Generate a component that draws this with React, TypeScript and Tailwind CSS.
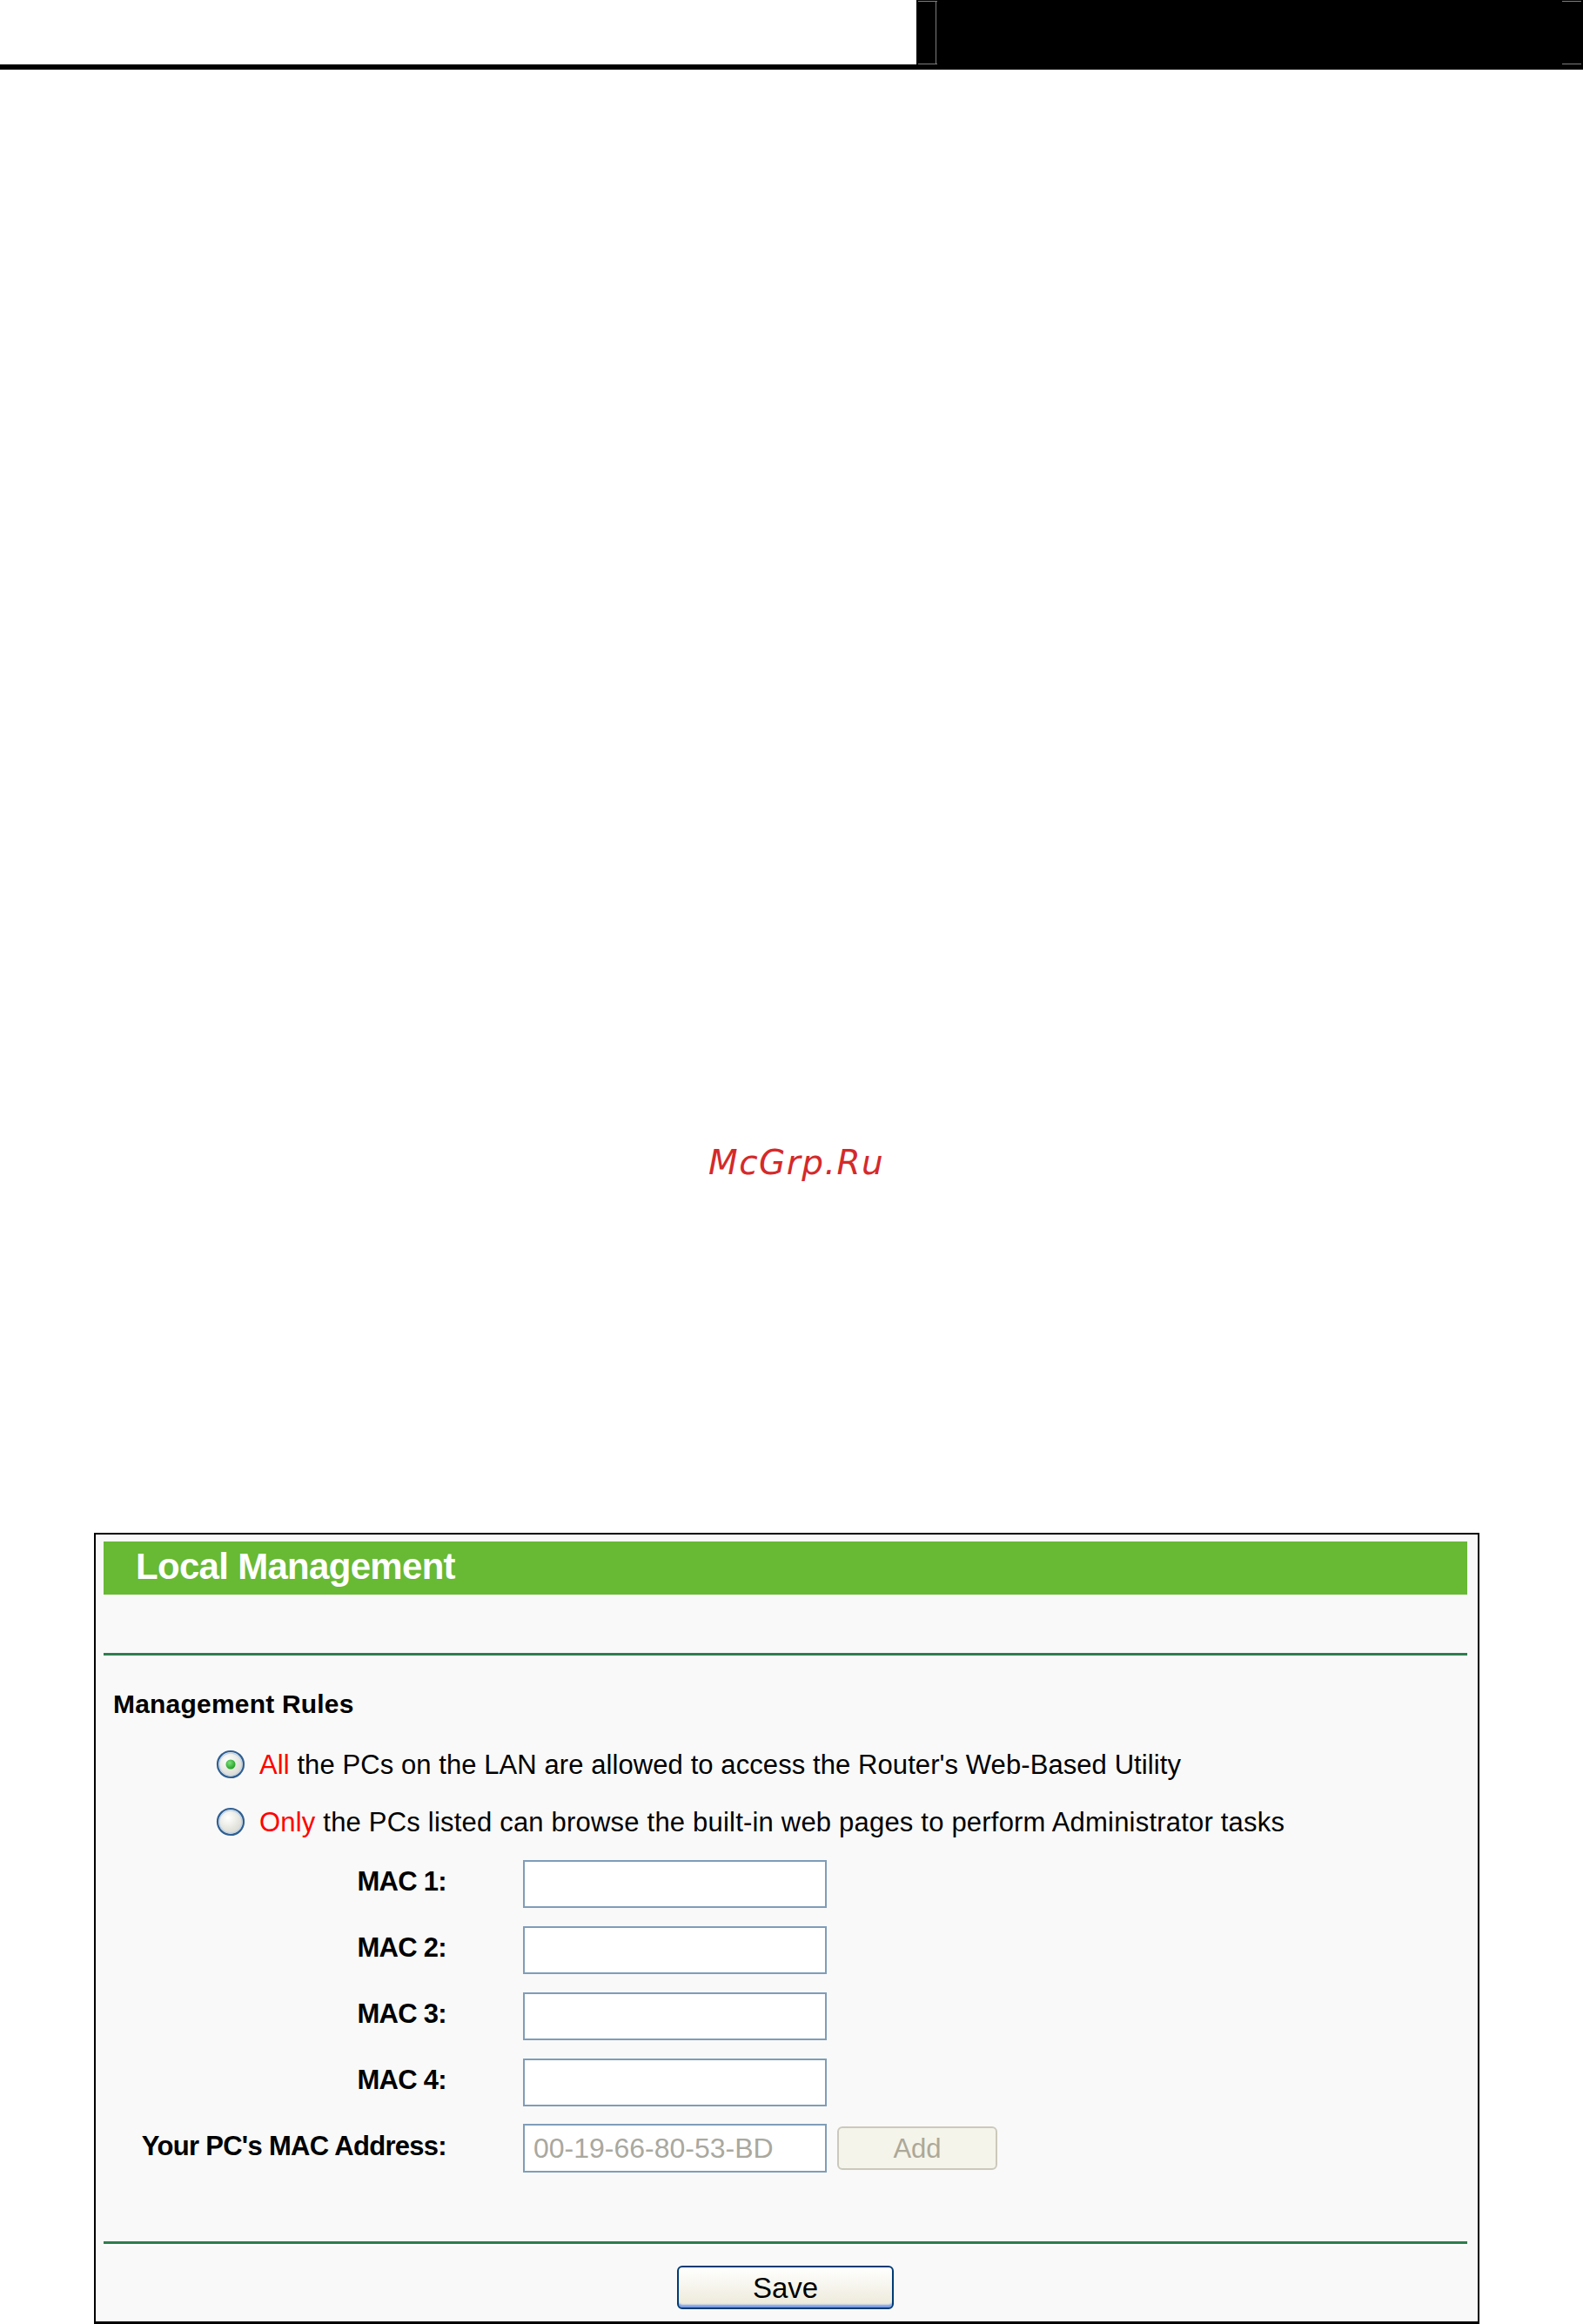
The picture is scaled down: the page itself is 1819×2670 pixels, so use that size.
import React from "react";

function Radio({ checked, id }: { checked: boolean; id: string }) {
  return (
    <svg width="34" height="34" viewBox="0 0 34 34" className="shrink-0">
      <defs>
        <radialGradient id={`bg-${id}`} cx="40%" cy="35%" r="70%">
          <stop offset="0" stopColor="#ffffff" />
          <stop offset="1" stopColor="#d6d6cc" />
        </radialGradient>
        <radialGradient id={`dot-${id}`} cx="40%" cy="35%" r="70%">
          <stop offset="0" stopColor="#7de07d" />
          <stop offset="1" stopColor="#1b9b1b" />
        </radialGradient>
      </defs>
      <circle cx="17" cy="17" r="15" fill={`url(#bg-${id})`} stroke="#2f5f92" strokeWidth="2.2" />
      <circle cx="17" cy="17" r="12.9" fill="none" stroke="#bcd2e8" strokeWidth="1.2" />
      {checked && <circle cx="17" cy="17" r="5.5" fill={`url(#dot-${id})`} />}
    </svg>
  );
}

function MacRow({ label, children }: { label: string; children?: React.ReactNode }) {
  return (
    <div className="flex items-center h-[56px]">
      <div className="w-[394px] text-right text-[31px] font-bold tracking-[-0.7px] leading-none pb-[6px] text-black">
        {label}
      </div>
      {children ?? (
        <div className="ml-[88px] w-[349px] h-[55px] border-2 border-[#7f9db9] bg-white" />
      )}
    </div>
  );
}

export default function App() {
  return (
    <div className="w-[1819px] h-[2670px] bg-white overflow-hidden flex flex-col font-['Liberation_Sans',Arial,sans-serif]">
      {/* top strip */}
      <div className="flex h-[80px] shrink-0">
        <div className="w-[1053px] h-[80px] bg-white border-b-[6px] border-black" />
        <div className="relative flex-1 h-[80px] bg-black">
          <div className="absolute left-[2px] top-[1px] w-[22px] h-[1px] bg-[#7d7d7d]" />
          <div className="absolute left-[22px] top-[1px] w-[1px] h-[73px] bg-[#7d7d7d]" />
          <div className="absolute left-[2px] top-[73px] w-[22px] h-[1px] bg-[#7d7d7d]" />
          <div className="absolute right-[2px] top-[1px] w-[22px] h-[1px] bg-[#7d7d7d]" />
          <div className="absolute right-[2px] top-[73px] w-[22px] h-[1px] bg-[#7d7d7d]" />
        </div>
      </div>

      {/* watermark */}
      <div className="mt-[1236px] h-[40px] pl-[814px] leading-[40px] text-[39px] italic tracking-[1.5px] text-[#d42a2a] font-['DejaVu_Sans',sans-serif] shrink-0">
        McGrp.Ru
      </div>

      {/* panel */}
      <div className="mt-[405px] ml-[108px] w-[1592px] flex-1 border-2 border-b-[3px] border-black bg-[#f9f9f9] pl-[9px] pr-[12px] pt-[8px] flex flex-col">
        <div className="h-[61px] bg-[#68b934] pl-[37px] pt-[8px] text-[42px] font-bold leading-none tracking-[-0.7px] text-white shrink-0">
          Local Management
        </div>
        <div className="h-[67px] shrink-0" />
        <div className="h-[3px] bg-[#2f7d4d] shrink-0" />
        <div className="h-[2px] bg-white shrink-0" />

        <div className="mt-[39px] h-[30px] pl-[11px] text-[30px] font-bold leading-[30px] tracking-[0.2px] text-black">
          Management Rules
        </div>

        <div className="mt-[34px] h-[40px] flex items-center pl-[129px] gap-[16px] text-[31px] leading-none tracking-[0.08px] text-black">
          <Radio checked id="r1" />
          <span>
            <span className="text-[#ff0000]">All</span> the PCs on the LAN are allowed to access the Router's Web-Based Utility
          </span>
        </div>
        <div className="mt-[26px] h-[40px] flex items-center pl-[129px] gap-[16px] text-[31px] leading-none tracking-[0.2px] text-black">
          <Radio checked={false} id="r2" />
          <span>
            <span className="text-[#ff0000]">Only</span> the PCs listed can browse the built-in web pages to perform Administrator tasks
          </span>
        </div>

        <div className="mt-[23px] flex flex-col gap-[20px]">
          <MacRow label="MAC 1:" />
          <MacRow label="MAC 2:" />
          <MacRow label="MAC 3:" />
          <MacRow label="MAC 4:" />
          <MacRow label="Your PC's MAC Address:">
            <div className="ml-[88px] w-[349px] h-[56px] border-2 border-[#7f9db9] bg-white flex items-center pl-[10px] text-[32px] leading-none text-[#a9a89f]">
              00-19-66-80-53-BD
            </div>
            <div className="ml-[12px] w-[184px] h-[50px] rounded-[6px] border-2 border-[#cbc9bc] bg-[#f5f4ea] flex items-center justify-center text-[31px] leading-none text-[#aca899]">
              Add
            </div>
          </MacRow>
        </div>

        <div className="mt-[79px] h-[3px] bg-[#2f7d4d] shrink-0" />
        <div className="h-[2px] bg-white shrink-0" />

        <div className="mt-[23px] flex justify-center">
          <div className="w-[249px] h-[50px] rounded-[6px] border-2 border-[#003c74] bg-linear-to-b from-white to-[#ece9d8] shadow-[inset_0_-4px_2px_-1px_#7b9ee8,inset_0_2px_1px_#ffffff] flex items-center justify-center text-[33px] leading-none text-black">
            Save
          </div>
        </div>
      </div>
    </div>
  );
}
